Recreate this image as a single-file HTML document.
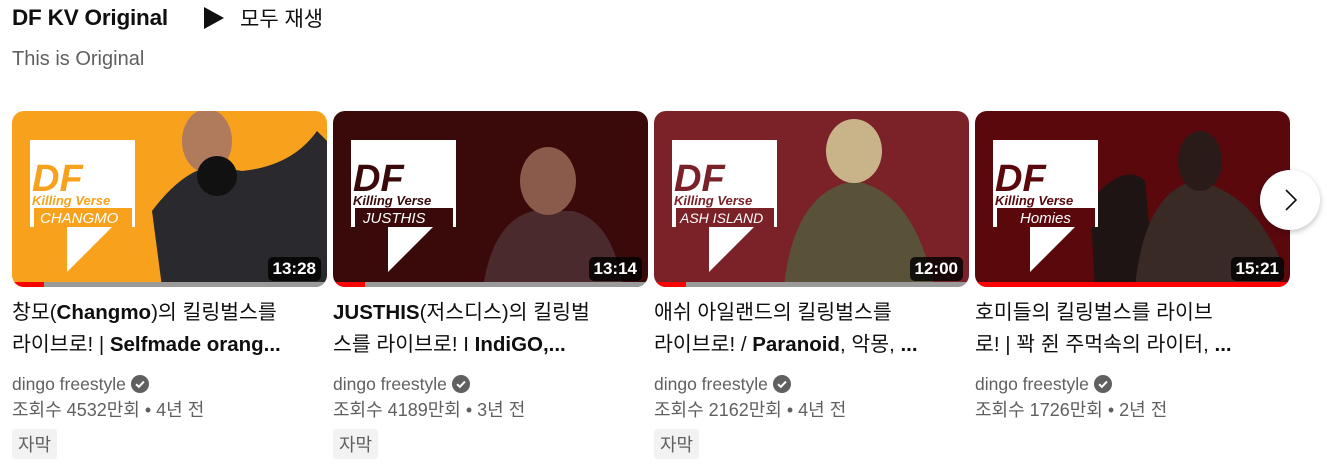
<!DOCTYPE html>
<html><head><meta charset="utf-8"><style>
*{margin:0;padding:0;box-sizing:border-box}
body{width:1327px;height:469px;background:#fff;font-family:"Liberation Sans","Noto Sans CJK KR",sans-serif;position:relative;overflow:hidden;color:#0f0f0f}
.h{position:absolute;left:12px;top:5px;font-size:22.5px;font-weight:bold;letter-spacing:-0.2px}
.play{position:absolute;left:204px;top:7px}
.pa{position:absolute;left:240px;top:3px;font-size:21px}
.sub{position:absolute;left:12px;top:48px;font-size:20px;color:#606060}
.card{position:absolute;top:111px;width:315px}
.th{position:relative;width:315px;height:176px;border-radius:12px;overflow:hidden}
.dur{position:absolute;right:6px;bottom:6px;background:rgba(0,0,0,.8);color:#fff;font-weight:bold;font-size:17px;padding:2px 5px;border-radius:5px}
.bar{position:absolute;left:0;bottom:0;height:5px;width:100%;background:#9a9a9a}
.bar i{display:block;height:100%;background:#f00}
.t{margin-top:10px;font-size:20.5px;line-height:32px;height:64px;overflow:hidden;white-space:nowrap}
.t b{font-weight:bold}
.ch{margin-top:10px;font-size:17.5px;color:#606060;line-height:26px}
.ch svg{vertical-align:-3px;margin-left:5px}
.m{font-size:18px;color:#606060;line-height:26px}
.tag{display:inline-block;margin-top:6px;background:#f2f2f2;color:#606060;font-size:18px;padding:2px 6px;border-radius:3px}
.next{position:absolute;left:1260px;top:170px;width:60px;height:60px;border-radius:50%;background:#fff;box-shadow:0 2px 6px rgba(0,0,0,.25)}
</style></head><body>
<div class="h">DF KV Original</div>
<svg class="play" width="20" height="22" viewBox="0 0 20 22"><path d="M0 0L20 11L0 22Z" fill="#0f0f0f"/></svg>
<div class="pa">모두 재생</div>
<div class="sub">This is Original</div>

<div class="card" style="left:12px">
<div class="th" style="background:#f8a11c">
<svg width="315" height="176" style="position:absolute;left:0;top:0">
<path d="M150 176 L140 100 Q170 60 200 55 L230 60 Q280 55 305 20 L315 30 L315 176Z" fill="#2a2a2e"/>
<ellipse cx="195" cy="30" rx="25" ry="32" fill="#b07a5c"/>
<circle cx="205" cy="65" r="20" fill="#111"/>
<path d="M18 29H123V116H100L55 161V116H18Z" fill="#fff"/>
<text x="20" y="80" font-family="Liberation Sans" font-weight="bold" font-style="italic" font-size="38" fill="#f8a11c">DF</text>
<text x="20" y="94" font-family="Liberation Sans" font-weight="bold" font-style="italic" font-size="13" fill="#f8a11c">Killing Verse</text>
<rect x="22" y="97" width="98" height="19" fill="#f8a11c"/>
<text x="28" y="112" font-family="Liberation Sans" font-style="italic" font-size="15" fill="#fff">CHANGMO</text>
</svg>
<div class="dur">13:28</div><div class="bar"><i style="width:32px"></i></div></div>
<div class="t">창모(<b>Changmo</b>)의 킬링벌스를<br>라이브로! | <b>Selfmade orang...</b></div>
<div class="ch">dingo freestyle<svg width="18" height="18" viewBox="0 0 16 16"><circle cx="8" cy="8" r="8" fill="#606060"/><path d="M4.5 8.2L7 10.5L11.5 5.8" stroke="#fff" stroke-width="1.8" fill="none"/></svg></div>
<div class="m">조회수 4532만회 • 4년 전</div>
<div class="tag">자막</div>
</div>

<div class="card" style="left:333px">
<div class="th" style="background:#3a0909">
<svg width="315" height="176" style="position:absolute;left:0;top:0">
<path d="M150 176 Q160 110 200 100 L240 100 Q280 110 290 176Z" fill="#4a2a2c"/>
<ellipse cx="215" cy="70" rx="28" ry="34" fill="#8a5a4a"/>
<path d="M18 29H123V116H100L55 161V116H18Z" fill="#fff"/>
<text x="20" y="80" font-family="Liberation Sans" font-weight="bold" font-style="italic" font-size="38" fill="#3a0909">DF</text>
<text x="20" y="94" font-family="Liberation Sans" font-weight="bold" font-style="italic" font-size="13" fill="#3a0909">Killing Verse</text>
<rect x="22" y="97" width="98" height="19" fill="#3a0909"/>
<text x="30" y="112" font-family="Liberation Sans" font-style="italic" font-size="15" fill="#fff">JUSTHIS</text>
</svg>
<div class="dur">13:14</div><div class="bar"><i style="width:32px"></i></div></div>
<div class="t"><b>JUSTHIS</b>(저스디스)의 킬링벌<br>스를 라이브로! I <b>IndiGO,...</b></div>
<div class="ch">dingo freestyle<svg width="18" height="18" viewBox="0 0 16 16"><circle cx="8" cy="8" r="8" fill="#606060"/><path d="M4.5 8.2L7 10.5L11.5 5.8" stroke="#fff" stroke-width="1.8" fill="none"/></svg></div>
<div class="m">조회수 4189만회 • 3년 전</div>
<div class="tag">자막</div>
</div>

<div class="card" style="left:654px">
<div class="th" style="background:#7b2128">
<svg width="315" height="176" style="position:absolute;left:0;top:0">
<path d="M130 176 Q140 80 200 70 Q260 80 280 176Z" fill="#5a5238"/>
<ellipse cx="200" cy="40" rx="28" ry="32" fill="#c9b48a"/>
<path d="M18 29H123V116H100L55 161V116H18Z" fill="#fff"/>
<text x="20" y="80" font-family="Liberation Sans" font-weight="bold" font-style="italic" font-size="38" fill="#7b2128">DF</text>
<text x="20" y="94" font-family="Liberation Sans" font-weight="bold" font-style="italic" font-size="13" fill="#7b2128">Killing Verse</text>
<rect x="22" y="97" width="98" height="19" fill="#7b2128"/>
<text x="26" y="112" font-family="Liberation Sans" font-style="italic" font-size="14" fill="#fff">ASH ISLAND</text>
</svg>
<div class="dur">12:00</div><div class="bar"><i style="width:32px"></i></div></div>
<div class="t">애쉬 아일랜드의 킬링벌스를<br>라이브로! / <b>Paranoid</b>, 악몽, <b>...</b></div>
<div class="ch">dingo freestyle<svg width="18" height="18" viewBox="0 0 16 16"><circle cx="8" cy="8" r="8" fill="#606060"/><path d="M4.5 8.2L7 10.5L11.5 5.8" stroke="#fff" stroke-width="1.8" fill="none"/></svg></div>
<div class="m">조회수 2162만회 • 4년 전</div>
<div class="tag">자막</div>
</div>

<div class="card" style="left:975px">
<div class="th" style="background:#5a080c">
<svg width="315" height="176" style="position:absolute;left:0;top:0">
<path d="M120 176 L115 90 Q150 50 170 70 L180 176Z" fill="#1e1414"/>
<path d="M160 176 Q170 80 220 70 Q280 80 310 160 L300 176Z" fill="#3a2a26"/>
<ellipse cx="225" cy="50" rx="22" ry="30" fill="#2a1a18"/>
<path d="M18 29H123V116H100L55 161V116H18Z" fill="#fff"/>
<text x="20" y="80" font-family="Liberation Sans" font-weight="bold" font-style="italic" font-size="38" fill="#5a080c">DF</text>
<text x="20" y="94" font-family="Liberation Sans" font-weight="bold" font-style="italic" font-size="13" fill="#5a080c">Killing Verse</text>
<rect x="22" y="97" width="98" height="19" fill="#5a080c"/>
<text x="45" y="112" font-family="Liberation Sans" font-style="italic" font-size="15" fill="#fff">Homies</text>
</svg>
<div class="dur">15:21</div><div class="bar"><i style="width:100%"></i></div></div>
<div class="t">호미들의 킬링벌스를 라이브<br>로! | 꽉 쥔 주먹속의 라이터, <b>...</b></div>
<div class="ch">dingo freestyle<svg width="18" height="18" viewBox="0 0 16 16"><circle cx="8" cy="8" r="8" fill="#606060"/><path d="M4.5 8.2L7 10.5L11.5 5.8" stroke="#fff" stroke-width="1.8" fill="none"/></svg></div>
<div class="m">조회수 1726만회 • 2년 전</div>
</div>

<div class="next"><svg width="60" height="60" viewBox="0 0 60 60"><path d="M26 20L36 30L26 40" stroke="#0f0f0f" stroke-width="1.6" fill="none"/></svg></div>
</body></html>
